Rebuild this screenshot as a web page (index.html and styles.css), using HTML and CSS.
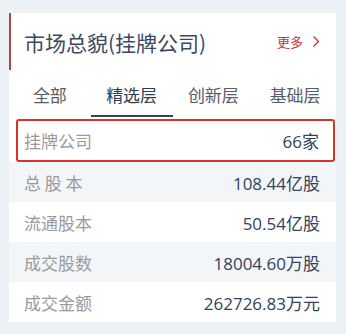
FILE: index.html
```html
<!DOCTYPE html>
<html lang="zh-CN">
<head>
    <meta charset="UTF-8">
    <title>市场总貌</title>
    <link rel="stylesheet" href="styles.css">
</head>
<body>

    <div class="panel">
        <div class="panel-head">
            <h2>市场总貌(挂牌公司)</h2>
            <a class="more" href="#">更多
                <svg width="8" height="13" viewBox="0 0 8 13"><path d="M1.5 1.5 L6.5 6.5 L1.5 11.5" fill="none" stroke="#c9343c" stroke-width="1.3"/></svg>
            </a>
        </div>

        <div class="tabs">
            <div class="tab">全部</div>
            <div class="tab active">精选层</div>
            <div class="tab">创新层</div>
            <div class="tab">基础层</div>
        </div>

        <div class="rows">
            <div class="row marked">
                <span class="label">挂牌公司</span>
                <span class="value">66家</span>
            </div>
            <div class="row">
                <span class="label">总 股 本</span>
                <span class="value">108.44亿股</span>
            </div>
            <div class="row">
                <span class="label">流通股本</span>
                <span class="value">50.54亿股</span>
            </div>
            <div class="row">
                <span class="label">成交股数</span>
                <span class="value">18004.60万股</span>
            </div>
            <div class="row">
                <span class="label">成交金额</span>
                <span class="value">262726.83万元</span>
            </div>
        </div>
    </div>

</body>
</html>
```

FILE: styles.css
```css
body {
    margin: 0;
    padding: 13px 10px 0 9px;
    background-color: #ecf1f5;
    font-family: "Open Sans", "Noto Sans CJK SC", sans-serif;
    color: #34425a;
}
.panel {
    background: #fff;
}
.panel-head {
    height: 57px;
    display: flex;
    align-items: center;
    justify-content: space-between;
    padding: 0 16px 0 13px;
    border-left: 2px solid #b5404c;
}
.panel-head h2 {
    margin: 0;
    font-family: "Noto Sans CJK SC", sans-serif;
    font-size: 21px;
    font-weight: normal;
    color: #3b4a60;
}
.more {
    display: flex;
    align-items: center;
    gap: 9px;
    font-family: "Noto Sans CJK SC", sans-serif;
    font-size: 13px;
    color: #c9343c;
    text-decoration: none;
}
.tabs {
    display: flex;
    height: 47px;
    margin-bottom: 2px;
}
.tab {
    flex: 1;
    display: flex;
    align-items: center;
    justify-content: center;
    padding-top: 3px;
    font-family: "Noto Sans CJK SC", sans-serif;
    font-size: 17px;
    color: #555d68;
    border-bottom: 2px solid transparent;
}
.tab.active {
    color: #2f3d52;
    border-bottom-color: #34425a;
}
.row {
    height: 40px;
    display: flex;
    align-items: center;
    justify-content: space-between;
    padding: 0 16px 0 15px;
}
.row:nth-child(even) {
    background-color: #f3f6f9;
}
.row.marked {
    height: 43px;
    margin: 0 1px 0 7px;
    padding: 0 14px 0 6px;
    border: 2px solid #d9322b;
    border-radius: 3px;
    box-sizing: border-box;
}
.label {
    font-family: "Noto Sans CJK SC", sans-serif;
    font-size: 17px;
    color: #9a9a9a;
}
.value {
    font-size: 17px;
    color: #34425a;
}
```
